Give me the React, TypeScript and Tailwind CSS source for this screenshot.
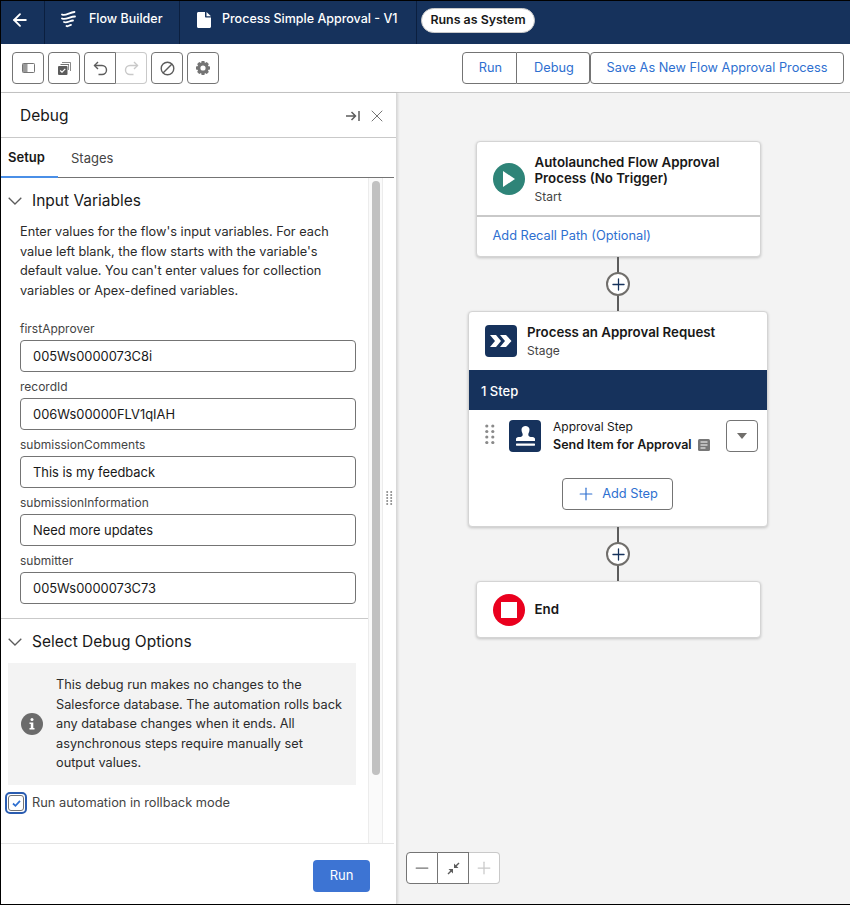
import React from "react";
import { ArrowLeft, X, Plus, Minus } from "lucide-react";

const FONT = "font-['Inter','Liberation_Sans',sans-serif]";

function FlowLogo() {
  return (
    <svg width="15" height="17" viewBox="0 0 15 17" fill="none" stroke="white" strokeWidth="1.8" strokeLinecap="round">
      <path d="M1 3.5 C4 5.5 8.5 1.5 13.5 1" />
      <path d="M1 7.5 C4.5 9.5 9 5.5 14 5.5" />
      <path d="M3 11 C5.5 12.5 9 9.5 12 9.5" />
      <path d="M5.5 15 C7 16 8.5 14 10 13.8" />
    </svg>
  );
}

function DocIcon() {
  return (
    <svg width="14" height="16" viewBox="0 0 14 16" fill="white">
      <path d="M1.5 0 H8 V4.5 C8 5 8.4 5.5 9 5.5 H14 V14.5 C14 15.4 13.4 16 12.5 16 H1.5 C.6 16 0 15.4 0 14.5 V1.5 C0 .6 .6 0 1.5 0 Z" />
      <path d="M9.5 0 L14 4.2 H9.5 Z" />
    </svg>
  );
}

function Chevron() {
  return (
    <svg width="14" height="8" viewBox="0 0 14 8" fill="none" stroke="#5c5c5c" strokeWidth="1.3" className="shrink-0">
      <path d="M0.7 0.7 L7 7 L13.3 0.7" />
    </svg>
  );
}

function ToolBtn({ children, cls = "rounded" }: { children: React.ReactNode; cls?: string }) {
  return <div className={`w-8 h-8 border border-[#747474] bg-white flex items-center justify-center ${cls}`}>{children}</div>;
}

function PanelIcon() {
  return (
    <svg width="13" height="10" viewBox="0 0 13 10">
      <rect x="0.5" y="0.5" width="12" height="9" rx="0.8" fill="#fff" stroke="#747474" />
      <rect x="1" y="1" width="4.5" height="8" fill="#9a9a9a" />
    </svg>
  );
}

function ChecksIcon() {
  return (
    <svg width="13" height="13" viewBox="0 0 13 13">
      <path d="M4 0 H12 C12.6 0 13 .4 13 1 V9 H12 V1 H4 Z" fill="#8a8a8a" />
      <path d="M2.5 2 H11 V8 H10.2 V2.9 H2.5 Z" fill="#747474" />
      <rect x="0" y="4" width="9.5" height="9" rx="1" fill="#5c5c5c" />
      <path d="M2.2 8.5 L4 10.2 L7.3 6.8" fill="none" stroke="#fff" strokeWidth="1.2" />
    </svg>
  );
}

function GearIcon() {
  return (
    <svg width="14" height="14" viewBox="0 0 14 14">
      <path
        fill="#747474"
        fillRule="evenodd"
        d="M5.6 0 H8.4 L8.9 1.9 L10.8 1 L12.8 3 L11.9 4.9 L14 5.6 V8.4 L11.9 9.1 L12.8 11 L10.8 13 L8.9 12.1 L8.4 14 H5.6 L5.1 12.1 L3.2 13 L1.2 11 L2.1 9.1 L0 8.4 V5.6 L2.1 4.9 L1.2 3 L3.2 1 L5.1 1.9 Z M7 4.4 A2.6 2.6 0 1 0 7 9.6 A2.6 2.6 0 1 0 7 4.4 Z"
      />
    </svg>
  );
}

function Field({ label, value }: { label: string; value: string }) {
  return (
    <div className="h-[58px]">
      <div className="h-[18px] text-[12px] leading-[18px] text-[#444444]">{label}</div>
      <div className="mt-[2px] h-8 w-[336px] border border-[#747474] rounded bg-white px-3 pt-[2px] flex items-center text-[12.9px] text-[#181818]">{value}</div>
    </div>
  );
}

function Connector() {
  return (
    <div className="flex flex-col items-center h-[54px] justify-center relative w-6">
      <div className="w-[2px] h-full bg-[#5c5c5c]" />
      <div className="absolute top-[15px] w-6 h-6 rounded-full bg-white border-2 border-[#706e6b] flex items-center justify-center">
        <Plus size={19} strokeWidth={1.6} className="text-[#16325c]" />
      </div>
    </div>
  );
}

export default function App() {
  return (
    <div className={`${FONT} w-[850px] h-[905px] bg-white border-l border-t border-b border-black flex flex-col overflow-hidden antialiased`}>
      {/* header */}
      <header className="h-[43px] shrink-0 bg-[#16325c] flex items-stretch text-white">
        <div className="w-[44px] border-r border-[#0b1f3f] flex items-center justify-center pr-[5px] pb-[6px]">
          <ArrowLeft size={20} strokeWidth={2.2} />
        </div>
        <div className="w-[135px] border-r border-[#0b1f3f] flex items-center pl-[16px] pb-[6px] gap-[13px] text-[12.5px] font-medium">
          <FlowLogo />
          <span>Flow Builder</span>
        </div>
        <div className="w-[237px] border-r border-[#0b1f3f] flex items-center pl-[17px] pb-[6px] gap-[11px] text-[12.5px] font-medium whitespace-nowrap">
          <DocIcon />
          <span>Process Simple Approval - V1</span>
        </div>
        <div className="flex items-center ml-[4px] pb-[4px]">
          <div className="h-[25px] w-[114px] rounded-full bg-white border border-[#c9c9c9] flex items-center justify-center text-[12.4px] font-semibold text-[#181818]">
            Runs as System
          </div>
        </div>
      </header>

      {/* toolbar */}
      <div className="h-[49px] shrink-0 bg-white border-b border-[#c9c9c9] flex items-center pl-[11px] pr-[6px]">
        <div className="flex gap-1 items-center">
          <ToolBtn><PanelIcon /></ToolBtn>
          <ToolBtn><ChecksIcon /></ToolBtn>
          <div className="flex">
            <ToolBtn cls="rounded-l rounded-r-none">
              <svg width="15" height="15" viewBox="0 0 15 15" fill="none" stroke="#5c5c5c" strokeWidth="1.4">
                <path d="M5 1 L1.5 4.5 L5 8" />
                <path d="M1.5 4.5 H9 C11.5 4.5 13.5 6.5 13.5 9 C13.5 11.5 11.5 13.5 9 13.5 H5.5" />
              </svg>
            </ToolBtn>
            <div className="w-[31px] h-8 border border-l-0 border-[#c9c9c9] rounded-r flex items-center justify-center">
              <svg width="15" height="15" viewBox="0 0 15 15" fill="none" stroke="#c9c9c9" strokeWidth="1.4">
                <path d="M10 1 L13.5 4.5 L10 8" />
                <path d="M13.5 4.5 H6 C3.5 4.5 1.5 6.5 1.5 9 C1.5 11.5 3.5 13.5 6 13.5 H9.5" />
              </svg>
            </div>
          </div>
          <ToolBtn>
            <svg width="15" height="15" viewBox="0 0 15 15" fill="none" stroke="#5c5c5c" strokeWidth="1.4">
              <circle cx="7.5" cy="7.5" r="6.3" />
              <path d="M3 12 L12 3" />
            </svg>
          </ToolBtn>
          <ToolBtn><GearIcon /></ToolBtn>
        </div>
        <div className="ml-auto flex text-[12.75px] text-[#2e6fd0]">
          <div className="w-[55px] h-8 border border-[#747474] rounded-l flex items-center justify-center pl-[2px]">Run</div>
          <div className="w-[73px] h-8 border border-l-0 border-[#747474] rounded-r flex items-center justify-center pl-[2px]">Debug</div>
          <div className="w-[254px] h-8 border border-[#747474] rounded flex items-center justify-center">Save As New Flow Approval Process</div>
        </div>
      </div>

      {/* body */}
      <div className="flex-1 flex min-h-0">
        {/* panel */}
        <aside className="w-[396px] shrink-0 bg-white border-r border-[#d8d8d8] shadow-[1px_0_2px_rgba(0,0,0,0.12)] flex flex-col relative z-10">
          <div className="h-[45px] shrink-0 border-b border-[#c9c9c9] flex items-center pl-[19px] pr-[9px] pt-[2px] text-[#181818]">
            <span className="text-[15.5px]">Debug</span>
            <div className="ml-auto flex items-center gap-[7px] text-[#747474]">
              <svg width="14" height="12" viewBox="0 0 14 12" fill="none" stroke="#5c5c5c" strokeWidth="1.5">
                <path d="M0 6 H9 M5.5 2 L9.5 6 L5.5 10" />
                <path d="M13 1 V11" />
              </svg>
              <X size={20} strokeWidth={1.2} />
            </div>
          </div>

          <div className="mr-[2px] h-[40px] shrink-0 flex border-b border-[#747474] text-[13px] relative">
            <div className="w-[57px] pl-[7px] pt-[2px] font-semibold flex items-center text-[#181818] border-b-2 border-[#4a8fe7] -mb-px">Setup</div>
            <div className="pl-[13px] pt-[2px] flex items-center text-[#444444]">Stages</div>
          </div>

          <div className="flex-1 min-h-0 flex relative">
            <div className="w-[367px] shrink-0 overflow-hidden">
              <section className="border-b border-[#c9c9c9] h-[441px]">
                <div className="h-[44px] pl-[7px] pt-[2px] flex items-center gap-[10px] text-[15.5px] text-[#181818]">
                  <Chevron />
                  <span>Input Variables</span>
                </div>
                <p className="pl-[19px] pr-[8px] text-[12.75px] leading-[19.5px] text-[#2b2b2b]">
                  Enter values for the flow's input variables. For each value left blank, the flow starts with the variable's default value. You can't enter values for collection variables or Apex-defined variables.
                </p>
                <div className="pl-[19px] mt-[20px]">
                  <Field label="firstApprover" value="005Ws0000073C8i" />
                  <Field label="recordId" value="006Ws00000FLV1qIAH" />
                  <Field label="submissionComments" value="This is my feedback" />
                  <Field label="submissionInformation" value="Need more updates" />
                  <Field label="submitter" value="005Ws0000073C73" />
                </div>
              </section>
              <section>
                <div className="h-[44px] pl-[7px] pt-[2px] flex items-center gap-[10px] text-[15.5px] text-[#181818]">
                  <Chevron />
                  <span>Select Debug Options</span>
                </div>
                <div className="ml-[7px] w-[348px] h-[122px] bg-[#f3f3f3] flex items-center">
                  <div className="w-[48px] flex justify-center">
                    <div className="w-[22px] h-[22px] rounded-full bg-[#6b6b6b] text-white flex items-center justify-center">
                      <svg width="10" height="12" viewBox="0 0 10 12" fill="white">
                        <circle cx="5" cy="1.6" r="1.5" />
                        <path d="M2.5 4.5 H6.3 V10 H7.5 V11.5 H2.5 V10 H3.8 V6 H2.5 Z" />
                      </svg>
                    </div>
                  </div>
                  <p className="w-[288px] text-[12.75px] leading-[19.5px] text-[#2b2b2b]">
                    This debug run makes no changes to the Salesforce database. The automation rolls back any database changes when it ends. All asynchronous steps require manually set output values.
                  </p>
                </div>
                <div className="flex items-center mt-[6px] pl-[4px] gap-[5px] h-[24px]">
                  <div className="w-[22px] h-[22px] rounded-[5px] border-2 border-[#2a5cb0] flex items-center justify-center">
                    <div className="w-[16px] h-[16px] rounded-[3px] border border-[#747474] flex items-center justify-center">
                      <svg width="9" height="7" viewBox="0 0 10 8" fill="none" stroke="#2e6fd0" strokeWidth="2">
                        <path d="M1 4 L3.8 6.6 L9 1" />
                      </svg>
                    </div>
                  </div>
                  <span className="text-[12.8px] text-[#444444]">Run automation in rollback mode</span>
                </div>
              </section>
            </div>
            {/* scrollbar */}
            <div className="w-[15px] shrink-0 bg-[#fafafa] border-x border-[#ececec] pt-[3px] px-[3px]">
              <div className="w-[8px] h-[594px] rounded-full bg-[#c1c1c1]" />
            </div>
            {/* resize handle */}
            <div className="ml-[3px] flex-1 flex items-center">
              <svg width="7" height="14" viewBox="0 0 7 14" fill="#8a8a8a" className="mt-[-26px]">
                {[1, 4, 7, 10, 13].map((y) => (
                  <g key={y}>
                    <circle cx="1.2" cy={y} r="1" />
                    <circle cx="5.2" cy={y} r="1" />
                  </g>
                ))}
              </svg>
            </div>
          </div>

          <div className="mr-[2px] h-[61px] shrink-0 border-t border-[#e5e5e5] flex items-start justify-end pr-[24px] pt-[16px]">
            <div className="w-[57px] h-[32px] bg-[#3d74d3] rounded text-white text-[13px] flex items-center justify-center">Run</div>
          </div>
        </aside>

        {/* canvas */}
        <main className="flex-1 bg-[#f3f3f3] relative flex flex-col items-center pt-[48px] pr-[11px]">
          <div className="w-[285px] h-[116px] bg-white border border-[#d4d4d4] rounded shadow-[0_1px_3px_rgba(0,0,0,0.2)] flex flex-col">
            <div className="h-[75px] border-b-2 border-[#c9c9c9] flex pl-[16px] pt-[12px] gap-[10px]">
              <div className="w-8 h-8 mt-[9px] rounded-full bg-[#2e8478] flex items-center justify-center shrink-0">
                <svg width="12" height="16" viewBox="0 0 12 16" fill="white"><path d="M0 0 L12 8 L0 16 Z" /></svg>
              </div>
              <div>
                <div className="text-[13.3px] font-semibold leading-[16px] text-[#181818]">Autolaunched Flow Approval<br />Process (No Trigger)</div>
                <div className="text-[12px] leading-[18px] text-[#444444] mt-[2px]">Start</div>
              </div>
            </div>
            <div className="flex-1 pl-[16px] pb-[1px] flex items-center text-[12.8px] text-[#2e6fd0]">Add Recall Path (Optional)</div>
          </div>
          <Connector />
          <div className="w-[300px] h-[216px] bg-white border border-[#d4d4d4] rounded shadow-[0_1px_3px_rgba(0,0,0,0.2)] flex flex-col">
            <div className="h-[58px] pl-[16px] pt-[13px] flex gap-[10px]">
              <div className="w-8 h-8 rounded-[4px] bg-[#16325c] flex items-center justify-center shrink-0">
                <svg width="22" height="12" viewBox="0 0 22 12" fill="white">
                  <path d="M0 0 H6 L11 6 L6 12 H0 L5 6 Z" />
                  <path d="M10 0 H16 L21.5 6 L16 12 H10 L15 6 Z" />
                </svg>
              </div>
              <div className="-mt-px">
                <div className="text-[13.3px] font-semibold leading-[16px] text-[#181818]">Process an Approval Request</div>
                <div className="text-[12px] leading-[18px] text-[#444444] mt-[2px]">Stage</div>
              </div>
            </div>
            <div className="h-[40px] bg-[#16325c] text-white text-[13px] font-medium pl-[12px] pt-[3px] flex items-center">1 Step</div>
            <div className="flex pl-[16px] pt-[7px] relative h-[60px]">
              <svg width="10" height="20" viewBox="0 0 10 20" fill="#8a8a8a" className="mt-[7px]">
                {[2, 7.5, 13, 18.5].map((y) => (
                  <g key={y}>
                    <circle cx="1.8" cy={y} r="1.6" />
                    <circle cx="7.8" cy={y} r="1.6" />
                  </g>
                ))}
              </svg>
              <div className="ml-[14px] w-8 h-8 mt-[3px] rounded-[4px] bg-[#16325c] flex items-center justify-center shrink-0">
                <svg width="19" height="21" viewBox="0 0 19 21" fill="white">
                  <path d="M5.5 3.5 C5.5 1.5 7.5 0 9.5 0 C11.5 0 13.5 1.5 13.5 3.5 C13.5 6 12.3 7 12.3 8.5 C12.3 10.5 13.5 11 16.5 11 C18 11 19 12 19 13 V15 H0 V13 C0 12 1 11 2.5 11 C5.5 11 6.7 10.5 6.7 8.5 C6.7 7 5.5 6 5.5 3.5 Z" />
                  <rect x="0" y="17.5" width="19" height="2.2" rx="0.6" />
                </svg>
              </div>
              <div className="ml-[12px] mt-px whitespace-nowrap">
                <div className="text-[12px] leading-[18px] text-[#181818]">Approval Step</div>
                <div className="text-[12.5px] leading-[18px] font-semibold text-[#181818] flex items-center gap-[6px]">
                  Send Item for Approval
                  <svg width="12" height="12" viewBox="0 0 12 12">
                    <rect width="12" height="12" rx="1.5" fill="#777777" />
                    <path d="M2.5 3 H9.5 M2.5 6 H9.5 M2.5 9 H7.5" stroke="#fff" strokeWidth="1.2" />
                  </svg>
                </div>
              </div>
              <div className="absolute right-[9px] top-[10px] w-8 h-8 border border-[#747474] rounded flex items-center justify-center">
                <svg width="10" height="6" viewBox="0 0 10 6" fill="#706e6b"><path d="M0 0 H10 L5 6 Z" /></svg>
              </div>
            </div>
            <div className="flex justify-center pt-[8px] pr-[2px]">
              <div className="w-[111px] h-8 border border-[#747474] rounded flex items-center justify-center gap-[6px] text-[12.8px] text-[#2e6fd0]">
                <Plus size={20} strokeWidth={1.4} />
                <span>Add Step</span>
              </div>
            </div>
          </div>
          <Connector />
          <div className="w-[285px] h-[57px] bg-white border border-[#d4d4d4] rounded shadow-[0_1px_3px_rgba(0,0,0,0.2)] flex items-center pl-[16px] gap-[10px]">
            <div className="w-8 h-8 rounded-full bg-[#ea001e] flex items-center justify-center">
              <div className="w-[16px] h-[16px] bg-white" />
            </div>
            <span className="text-[13.3px] font-semibold text-[#181818]">End</span>
          </div>

          <div className="absolute left-[9px] bottom-[20px] flex h-8">
            <div className="w-8 border border-[#747474] rounded-l bg-white flex items-center justify-center">
              <Minus size={20} strokeWidth={1.5} className="text-[#747474]" />
            </div>
            <div className="w-[31px] border border-l-0 border-[#747474] bg-white flex items-center justify-center">
              <svg width="13" height="13" viewBox="0 0 13 13" fill="#5c5c5c">
                <path d="M0.5 11.5 L3.3 8.7 L1.5 7 H6 V11.5 L4.3 9.8 L1.5 12.5 Z" />
                <path d="M12.5 1.5 L9.7 4.3 L11.5 6 H7 V1.5 L8.7 3.2 L11.5 0.5 Z" />
              </svg>
            </div>
            <div className="w-[31px] border border-l-0 border-[#c9c9c9] rounded-r bg-white flex items-center justify-center">
              <Plus size={20} strokeWidth={1.5} className="text-[#c9c9c9]" />
            </div>
          </div>
        </main>
      </div>
    </div>
  );
}
